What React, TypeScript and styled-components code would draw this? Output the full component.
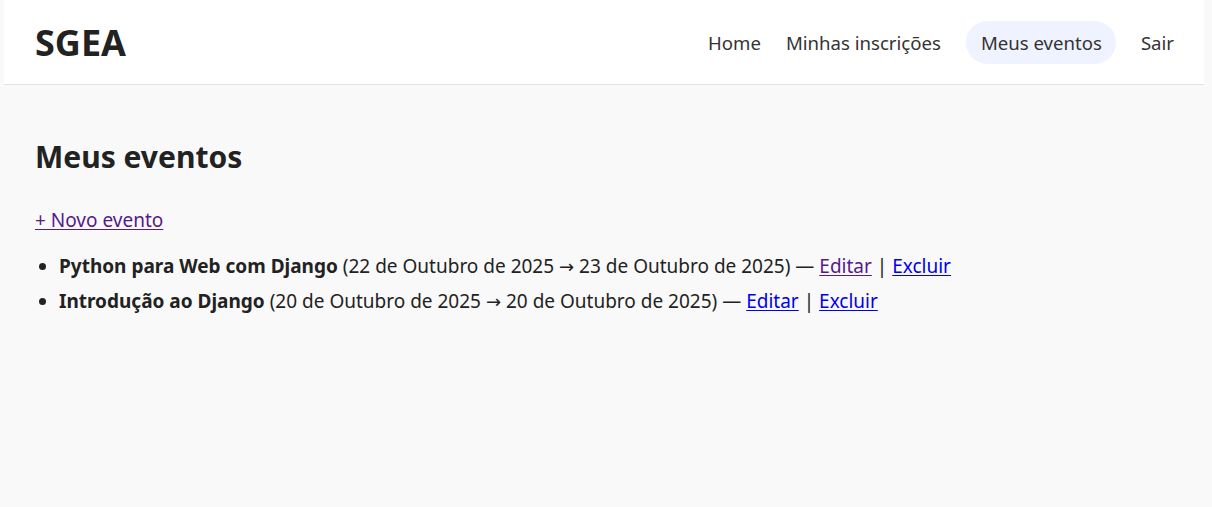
import React from "react";
import styled, { createGlobalStyle } from "styled-components";

const Global = createGlobalStyle`
  html, body { margin: 0; padding: 0; }
  body {
    background: #f9f9f9;
    color: #222;
    font-family: "Segoe UI", "Noto Sans", sans-serif;
    font-size: 19px;
  }
`;

const Header = styled.header`
  display: flex;
  align-items: center;
  justify-content: space-between;
  height: 84px;
  margin: 0 8px 0 4px;
  padding: 0 30px 0 31px;
  background: #fff;
  border-bottom: 1px solid #e3e3e3;
`;

const Brand = styled.div`
  font-size: 36px;
  font-weight: 700;
  color: #222;
`;

const Nav = styled.nav`
  display: flex;
  align-items: center;
  gap: 25px;
`;

const NavLink = styled.a<{ $active?: boolean }>`
  display: inline-flex;
  align-items: center;
  height: 43px;
  padding: ${(p) => (p.$active ? "0 14px 0 15px" : "0")};
  border-radius: 22px;
  font-size: 18.6px;
  color: #333;
  text-decoration: none;
  background: ${(p) => (p.$active ? "#eff2ff" : "transparent")};
`;

const Main = styled.main`
  padding: 54px 35px 40px;
`;

const Title = styled.h1`
  margin: 0 0 30px;
  font-size: 30px;
  line-height: 36px;
  font-weight: 700;
  color: #222;
`;

const Link = styled.a<{ $visited?: boolean }>`
  color: ${(p) => (p.$visited ? "#551a8b" : "#0000ee")};
  text-decoration: underline;
  text-underline-offset: 2px;
`;

const Actions = styled.p`
  margin: 0 0 17px;
  line-height: 30px;
`;

const List = styled.ul`
  margin: 0;
  padding-left: 24px;
`;

const Item = styled.li`
  line-height: 29px;
  margin-bottom: 6px;
`;

const Arrow = styled.span`
  font-family: "DejaVu Sans", sans-serif;
  font-size: 18px;
`;

const events = [
  {
    name: "Python para Web com Django",
    from: "22 de Outubro de 2025",
    to: "23 de Outubro de 2025",
    editVisited: true,
  },
  {
    name: "Introdução ao Django",
    from: "20 de Outubro de 2025",
    to: "20 de Outubro de 2025",
    editVisited: false,
  },
];

export default function App() {
  return (
    <>
      <Global />
      <Header>
        <Brand>SGEA</Brand>
        <Nav>
          <NavLink href="#">Home</NavLink>
          <NavLink href="#">Minhas inscrições</NavLink>
          <NavLink href="#" $active>Meus eventos</NavLink>
          <NavLink href="#">Sair</NavLink>
        </Nav>
      </Header>
      <Main>
        <Title>Meus eventos</Title>
        <Actions>
          <Link href="#" $visited>+ Novo evento</Link>
        </Actions>
        <List>
          {events.map((e) => (
            <Item key={e.name}>
              <strong>{e.name}</strong> ({e.from} <Arrow>→</Arrow> {e.to}) —{" "}
              <Link href="#" $visited={e.editVisited}>Editar</Link> |{" "}
              <Link href="#">Excluir</Link>
            </Item>
          ))}
        </List>
      </Main>
    </>
  );
}
